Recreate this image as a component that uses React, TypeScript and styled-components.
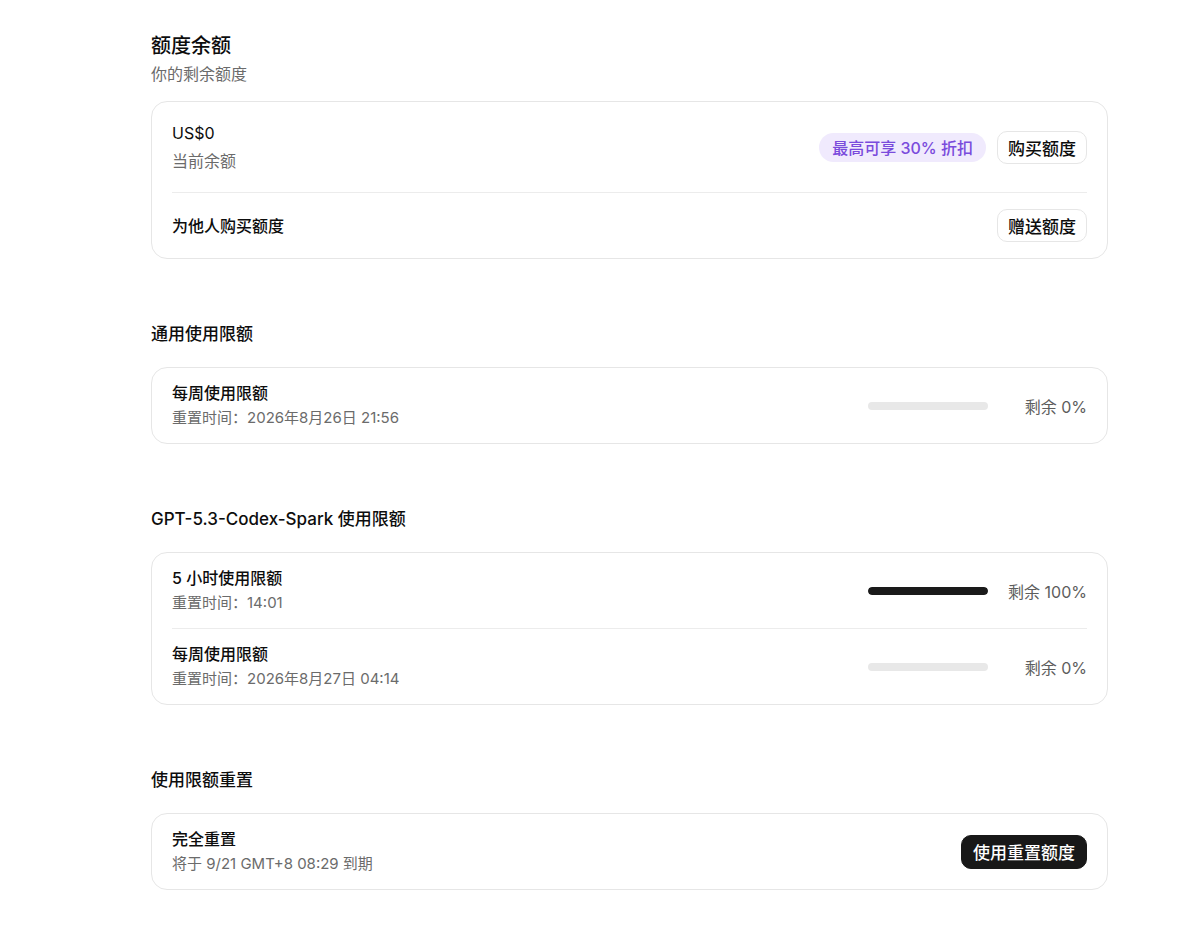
import React from 'react';
import styled, { createGlobalStyle } from 'styled-components';

const GlobalStyle = createGlobalStyle`
  body {
    margin: 0;
    background: #ffffff;
    font-family: "Inter", "Noto Sans CJK SC", sans-serif;
    color: #0d0d0d;
    -webkit-font-smoothing: antialiased;
  }
`;

const Page = styled.div`
  width: 957px;
  margin-left: 151px;
  padding: 32px 0 40px;
  display: flex;
  flex-direction: column;
  gap: 63px;
`;

const Section = styled.section`
  display: flex;
  flex-direction: column;
`;

const PageTitle = styled.h1`
  margin: 0;
  font-size: 20px;
  line-height: 28px;
  font-weight: 500;
`;

const PageSubtitle = styled.p`
  margin: 2px 0 15px;
  font-size: 16px;
  line-height: 24px;
  color: #6b6b6b;
`;

const SectionTitle = styled.h2`
  margin: 0 0 21px;
  font-size: 17px;
  line-height: 24px;
  font-weight: 500;
`;

const Card = styled.div`
  border: 1px solid #e6e6e6;
  border-radius: 16px;
  padding: 0 20px;
`;

const Row = styled.div<{ $pad?: number }>`
  display: flex;
  align-items: center;
  justify-content: space-between;
  padding: ${p => p.$pad ?? 15}px 0;
  & + & {
    border-top: 1px solid #ececec;
  }
`;

const Info = styled.div<{ $gap?: number }>`
  display: flex;
  flex-direction: column;
  gap: ${p => p.$gap ?? 5}px;
`;

const Label = styled.div`
  font-size: 16px;
  line-height: 20px;
  font-weight: 500;
`;

const Amount = styled.div`
  font-size: 16px;
  line-height: 24px;
`;

const Hint = styled.div<{ $size?: number }>`
  font-size: ${p => p.$size ?? 15}px;
  line-height: ${p => (p.$size ? 24 : 20)}px;
  color: #6b6b6b;
`;

const Actions = styled.div`
  display: flex;
  align-items: center;
  gap: 11px;
`;

const Badge = styled.span`
  display: inline-flex;
  align-items: center;
  height: 29px;
  padding: 0 13px;
  border-radius: 15px;
  background: #f0eafd;
  color: #7a4bdc;
  font-size: 16px;
  font-weight: 500;
`;

const Button = styled.button<{ $dark?: boolean }>`
  height: ${p => (p.$dark ? 34 : 33)}px;
  padding: 0 ${p => (p.$dark ? 11 : 10)}px;
  border-radius: 10px;
  font-family: inherit;
  font-size: 17px;
  font-weight: 500;
  cursor: pointer;
  border: 1px solid ${p => (p.$dark ? '#181818' : '#e6e6e6')};
  background: ${p => (p.$dark ? '#181818' : '#ffffff')};
  color: ${p => (p.$dark ? '#ffffff' : '#0d0d0d')};
`;

const Meter = styled.div`
  display: flex;
  align-items: center;
  gap: 17px;
`;

const Track = styled.div`
  width: 120px;
  height: 8px;
  border-radius: 4px;
  background: #e8e8e8;
  overflow: hidden;
`;

const Fill = styled.div`
  height: 100%;
  border-radius: 4px;
  background: #1a1a1a;
`;

const Percent = styled.span`
  width: 82px;
  text-align: right;
  font-size: 16px;
  color: #5d5d5d;
`;

type Limit = { name: string; reset: string; left: number };

const LimitRow = ({ name, reset, left }: Limit) => (
  <Row>
    <Info>
      <Label>{name}</Label>
      <Hint>重置时间：{reset}</Hint>
    </Info>
    <Meter>
      <Track>
        <Fill style={{ width: `${left}%` }} />
      </Track>
      <Percent>剩余 {left}%</Percent>
    </Meter>
  </Row>
);

const general: Limit[] = [{ name: '每周使用限额', reset: '2026年8月26日 21:56', left: 0 }];

const spark: Limit[] = [
  { name: '5 小时使用限额', reset: '14:01', left: 100 },
  { name: '每周使用限额', reset: '2026年8月27日 04:14', left: 0 },
];

export default function App() {
  return (
    <>
      <GlobalStyle />
      <Page>
        <Section>
          <PageTitle>额度余额</PageTitle>
          <PageSubtitle>你的剩余额度</PageSubtitle>
          <Card>
            <Row $pad={19}>
              <Info $gap={4}>
                <Amount>US$0</Amount>
                <Hint $size={16}>当前余额</Hint>
              </Info>
              <Actions>
                <Badge>最高可享 30% 折扣</Badge>
                <Button>购买额度</Button>
              </Actions>
            </Row>
            <Row $pad={16}>
              <Label>为他人购买额度</Label>
              <Button>赠送额度</Button>
            </Row>
          </Card>
        </Section>

        <Section>
          <SectionTitle>通用使用限额</SectionTitle>
          <Card>
            {general.map(l => (
              <LimitRow key={l.name} {...l} />
            ))}
          </Card>
        </Section>

        <Section>
          <SectionTitle>GPT-5.3-Codex-Spark 使用限额</SectionTitle>
          <Card>
            {spark.map(l => (
              <LimitRow key={l.name} {...l} />
            ))}
          </Card>
        </Section>

        <Section>
          <SectionTitle>使用限额重置</SectionTitle>
          <Card>
            <Row $pad={15}>
              <Info>
                <Label>完全重置</Label>
                <Hint>将于 9/21 GMT+8 08:29 到期</Hint>
              </Info>
              <Button $dark>使用重置额度</Button>
            </Row>
          </Card>
        </Section>
      </Page>
    </>
  );
}
